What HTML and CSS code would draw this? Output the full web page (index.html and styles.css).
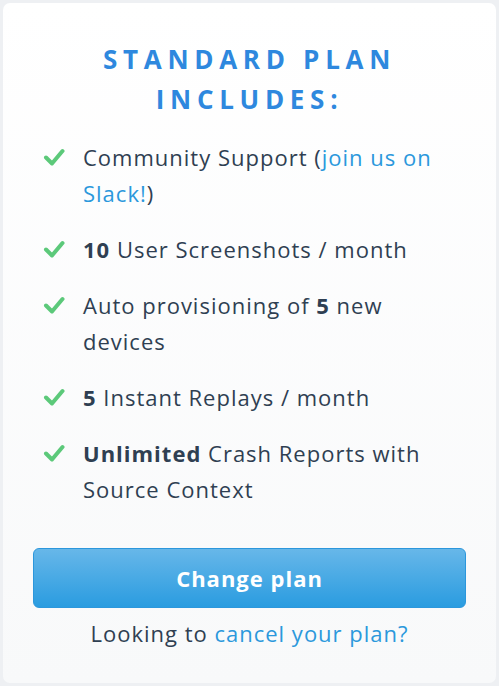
FILE: index.html
```html
<!DOCTYPE html>
<html>
<head>
<meta charset="utf-8">
<link rel="stylesheet" href="styles.css">
</head>
<body>
<div class="card">
  <h2 class="title">STANDARD PLAN<br>INCLUDES:</h2>
  <ul class="features">
    <li><svg class="check" viewBox="0 0 22 20"><path d="M3 10.5 L9 16.5 L19.5 4" fill="none" stroke="#5cc97a" stroke-width="4" stroke-linecap="round" stroke-linejoin="round"/></svg><span>Community Support (<a href="#">join us on Slack!</a>)</span></li>
    <li><svg class="check" viewBox="0 0 22 20"><path d="M3 10.5 L9 16.5 L19.5 4" fill="none" stroke="#5cc97a" stroke-width="4" stroke-linecap="round" stroke-linejoin="round"/></svg><span><b>10</b> User Screenshots / month</span></li>
    <li><svg class="check" viewBox="0 0 22 20"><path d="M3 10.5 L9 16.5 L19.5 4" fill="none" stroke="#5cc97a" stroke-width="4" stroke-linecap="round" stroke-linejoin="round"/></svg><span>Auto provisioning of <b>5</b> new devices</span></li>
    <li><svg class="check" viewBox="0 0 22 20"><path d="M3 10.5 L9 16.5 L19.5 4" fill="none" stroke="#5cc97a" stroke-width="4" stroke-linecap="round" stroke-linejoin="round"/></svg><span><b>5</b> Instant Replays / month</span></li>
    <li><svg class="check" viewBox="0 0 22 20"><path d="M3 10.5 L9 16.5 L19.5 4" fill="none" stroke="#5cc97a" stroke-width="4" stroke-linecap="round" stroke-linejoin="round"/></svg><span><b>Unlimited</b> Crash Reports with Source Context</span></li>
  </ul>
  <button class="btn">Change plan</button>
  <p class="cancel">Looking to <a href="#">cancel your plan?</a></p>
</div>
</body>
</html>
```
FILE: styles.css
```css
* { box-sizing: border-box; }
html, body { margin: 0; padding: 0; }
body {
  background: #eef0f3;
  padding: 3px;
  font-family: "Open Sans", "Lato", sans-serif;
  color: #2f3f52;
}
.card {
  width: 493px;
  height: 680px;
  border-radius: 7px;
  background: linear-gradient(#ffffff, #f8f9fa);
  padding: 36px 30px 0;
}
.title {
  margin: 0;
  text-align: center;
  font-size: 26px;
  line-height: 40px;
  letter-spacing: 5.7px;
  font-weight: 700;
  color: #2e88de;
}
.features {
  list-style: none;
  margin: 20px 0 0;
  padding: 0;
  display: flex;
  flex-direction: column;
  gap: 20px;
}
.features li {
  display: flex;
  align-items: flex-start;
  gap: 18px;
  padding-left: 10px;
  font-size: 22px;
  line-height: 36px;
  letter-spacing: 1px;
}
.check {
  flex: none;
  width: 22px;
  height: 20px;
  margin-top: 8px;
}
.features b { font-weight: 700; }
a { color: #2b98dc; text-decoration: none; }
.btn {
  display: block;
  width: 100%;
  height: 60px;
  margin-top: 41px;
  border: 1px solid #2c97dc;
  border-radius: 6px;
  background: linear-gradient(#67b7e9, #2a9ce0);
  color: #fff;
  font-family: inherit;
  font-size: 22px;
  font-weight: 700;
  letter-spacing: 1px;
}
.cancel {
  margin: 7px 0 0;
  text-align: center;
  font-size: 22px;
  line-height: 36px;
  letter-spacing: 1px;
}
```
